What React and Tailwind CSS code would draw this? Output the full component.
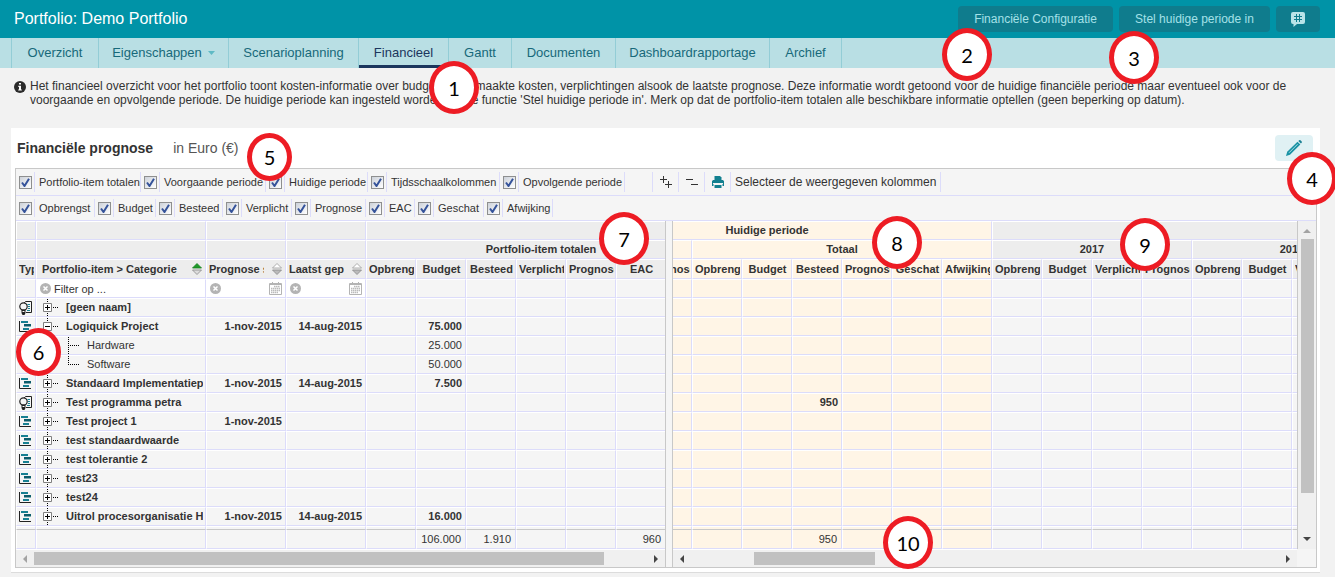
import clsx from 'clsx';

const tabs = [
  { name: 'Overzicht', width: 'w-[88px]' },
  { name: 'Eigenschappen', width: 'w-[130px]', menu: true },
  { name: 'Scenarioplanning', width: 'w-[130px]' },
  { name: 'Financieel', width: 'w-[90px]', active: true },
  { name: 'Gantt', width: 'w-[63px]' },
  { name: 'Documenten', width: 'w-[104px]' },
  { name: 'Dashboardrapportage', width: 'w-[154px]' },
  { name: 'Archief', width: 'w-[72px]' },
];

const periodFilters = [
  { name: 'Portfolio-item totalen', width: 'w-[106px]' },
  { name: 'Voorgaande periode', width: 'w-[106px]' },
  { name: 'Huidige periode', width: 'w-[83px]' },
  { name: 'Tijdsschaalkolommen', width: 'w-[113px]' },
  { name: 'Opvolgende periode', width: 'w-[106px]' },
];

const columnFilters = [
  { name: 'Opbrengst', width: 'w-[60px]' },
  { name: 'Budget', width: 'w-[42px]' },
  { name: 'Besteed', width: 'w-[48px]' },
  { name: 'Verplicht', width: 'w-[50px]' },
  { name: 'Prognose', width: 'w-[55px]' },
  { name: 'EAC', width: 'w-[30px]' },
  { name: 'Geschat', width: 'w-[50px]' },
  { name: 'Afwijking', width: 'w-[50px]' },
];

const totalColumns = ['Opbrengst', 'Budget', 'Besteed', 'Verplicht', 'Prognose', 'EAC', 'Geschat'];

const currentColumns = [
  'Budget', 'Verplicht', 'Prognose',
  'Opbrengst', 'Budget', 'Besteed', 'Prognose', 'Geschat', 'Afwijking',
];
const nextColumns = [
  'Opbrengst', 'Budget', 'Verplicht', 'Prognose',
  'Opbrengst', 'Budget', 'Verplicht', 'Prognose',
];
const periodColumns = [...currentColumns, ...nextColumns];

const rows = [
  { type: 'program', name: '[geen naam]' },
  { type: 'project', name: 'Logiquick Project', open: true, start: '1-nov-2015', end: '14-aug-2015', budget: '75.000' },
  { child: true, name: 'Hardware', budget: '25.000' },
  { child: true, last: true, name: 'Software', budget: '50.000' },
  { type: 'project', name: 'Standaard Implementatieproject', start: '1-nov-2015', end: '14-aug-2015', budget: '7.500' },
  { type: 'program', name: 'Test programma petra', spent: '950' },
  { type: 'project', name: 'Test project 1', start: '1-nov-2015' },
  { type: 'project', name: 'test standaardwaarde' },
  { type: 'project', name: 'test tolerantie 2' },
  { type: 'project', name: 'test23' },
  { type: 'project', name: 'test24' },
  { type: 'project', name: 'Uitrol procesorganisatie HR', start: '1-nov-2015', end: '14-aug-2015', budget: '16.000' },
];

const pins = [
  { left: 429, top: 61 },
  { left: 942, top: 28 },
  { left: 1109, top: 31 },
  { left: 1287, top: 152 },
  { left: 247, top: 133, small: true },
  { left: 16, top: 328, small: true },
  { left: 599, top: 212 },
  { left: 872, top: 216 },
  { left: 1120, top: 218 },
  { left: 883, top: 516 },
];

const box = 'overflow-hidden whitespace-nowrap border border-l-white border-r-[#dcdcfa] border-b-[#dcdcfa] p-0';
const cell = `${box} border-t-white`;
const footCell = `${box} border-t-[#c8c8c8] pr-1 text-right`;
const head = 'bg-[#ededed] text-center font-bold';
const plain = 'bg-[#f5f5f5]';
const current = 'bg-[#fff5e6]';

/* ========== Icons ========== */

function InfoIcon() {
  return (
    <svg className="mt-[2px] h-3 w-3 shrink-0" viewBox="0 0 12 12">
      <circle cx="6" cy="6" r="6" fill="#2b2b2b" />
      <path d="M5 2h2v1.6H5zM4.3 4.8H7v3.6h.8v1.2H4.2V8.4H5V6h-.7z" fill="#fff" />
    </svg>
  );
}

function CommentIcon() {
  return (
    <svg className="h-[15px] w-[14px]" viewBox="0 0 14 15">
      <path d="M2 0h10a2 2 0 0 1 2 2v8a2 2 0 0 1-2 2H6l-3.5 3v-3H2a2 2 0 0 1-2-2V2a2 2 0 0 1 2-2z" fill="#b9e3e8" />
      <path d="M5.5 2v8M8.5 2v8M3 4.5h8M3 7.5h8" stroke="#0f7c8d" strokeWidth="1" />
    </svg>
  );
}

function PencilIcon() {
  return (
    <svg className="h-4 w-4" viewBox="0 0 16 16">
      <path d="M0 16l1.2-4.2L11.5 1.7l2.8 2.8L4 14.8z" fill="#1a93a5" />
      <path d="M3 12.8L11.6 4.2" stroke="#a9d9e0" strokeWidth="1" />
      <path d="M12.3 1l1-.8q.8-.4 1.5.3l.7.7q.7.7.2 1.5l-.8.9z" fill="#1a7f93" />
    </svg>
  );
}

function PrintIcon() {
  return (
    <svg className="h-3 w-3" viewBox="0 0 12 12">
      <path d="M3 0h5l1.5 1.5V4h-7V0z" fill="#12808f" />
      <path d="M0 5l1.2-1h9.6L12 5v5h-1.5V8h-9v2H0z" fill="#12808f" />
      <path d="M2.5 9h7v3h-7z" fill="#12808f" />
      <path d="M1 7.5h10" stroke="#f5f5f5" />
    </svg>
  );
}

function PlusPlusIcon() {
  return (
    <svg className="h-3 w-3" viewBox="0 0 12 12">
      <path d="M0 3.5h7M3.5 0v7M5 8.5h7M8.5 5v7" stroke="#333" fill="none" />
    </svg>
  );
}

function MinusMinusIcon() {
  return (
    <svg className="h-3 w-3" viewBox="0 0 12 12">
      <path d="M0 3.5h7M5 8.5h7" stroke="#333" fill="none" />
    </svg>
  );
}

function ProjectIcon() {
  return (
    <svg className="h-[11px] w-3" viewBox="0 0 12 11">
      <path d="M.5 0v10.5H12" stroke="#222" fill="none" />
      <path d="M2 0h7v2H2zM4 7h6v2H4z" fill="#178092" />
      <path d="M5 3h7v2.500H5z" fill="#0b5c6b" />
    </svg>
  );
}

function ProgramIcon() {
  return (
    <svg className="h-[14px] w-[14px]" viewBox="0 0 14 14">
      <path d="M5 2L6.5 .5h6v11H7" stroke="#222" fill="none" />
      <path d="M8.5 3.5H11M9 5.5h2M9 7.5h2M8 9.5h3" stroke="#178092" />
      <circle cx="4.5" cy="5.5" r="3.7" fill="#f5f5f5" stroke="#222" strokeWidth="1.2" />
      <path d="M2.5 8.5h4V12l-1 2h-2l-1-2z" fill="#222" />
      <path d="M3.5 10.5h2" stroke="#fff" />
    </svg>
  );
}

function SortIcon({ sorted }) {
  return (
    <svg className="mr-[3px] h-3 w-[10px] shrink-0" viewBox="0 0 10 12">
      <path d="M5 .5L9.5 5h-9z" fill={sorted ? '#1e9a2a' : '#fff'} stroke={sorted ? '#16801f' : '#999'} strokeWidth=".8" />
      <path d="M.5 7h9L5 11.5z" fill={sorted ? '#ddd' : '#bbb'} stroke="#888" strokeWidth=".8" />
    </svg>
  );
}

function ClearIcon() {
  return (
    <svg className="h-[11px] w-[11px]" viewBox="0 0 11 11">
      <circle cx="5.5" cy="5.5" r="5.5" fill="#b4b4b4" />
      <path d="M3.5 3.5l4 4M7.5 3.5l-4 4" stroke="#fff" strokeWidth="1.5" />
    </svg>
  );
}

function CalendarIcon() {
  return (
    <svg className="h-[13px] w-[13px]" viewBox="0 0 13 13">
      <path d="M.5 1.5h12v11H.5z" fill="#fff" stroke="#b4b4b4" />
      <path d="M1 2.5h11M3.5 0v3M9.5 0v3" stroke="#b4b4b4" />
      <path d="M5 4.5h6M2 6.5h9M2 8.5h9M2 10.5h7" stroke="#bbb" strokeWidth="1.4" strokeDasharray="1.5 .5" />
    </svg>
  );
}

function Arrow({ direction, muted }) {
  const shapes = {
    left: 'M6 0v8L2 4z',
    right: 'M2 0v8l4-4z',
    up: 'M0 6h8L4 2z',
    down: 'M0 2h8L4 6z',
  };
  return (
    <svg className="h-2 w-2 shrink-0" viewBox="0 0 8 8">
      <path d={shapes[direction]} fill={muted ? '#a3a3a3' : '#444'} />
    </svg>
  );
}

/* Branch lines and the fold box in front of a name */
function TreeBranch({ row }) {
  if (row.child) {
    return (
      <svg className="h-[17px] w-[50px] shrink-0" viewBox="0 0 50 17">
        <path d="M10.5 0v17" stroke="#000" strokeDasharray="1 1" />
        <path d={row.last ? 'M31.5 0v9' : 'M31.5 0v17'} stroke="#000" strokeDasharray="1 1" />
        <path d="M33 8.5h10" stroke="#000" strokeDasharray="1 1" />
      </svg>
    );
  }
  return (
    <svg className="h-[17px] w-[29px] shrink-0" viewBox="0 0 29 17">
      <path d="M10.5 0v17M16 8.5h6" stroke="#000" strokeDasharray="1 1" />
      <path d="M6.5 4.5h8v8h-8z" fill="#fff" stroke="#808080" />
      <path d={row.open ? 'M8 8.5h5' : 'M8 8.5h5M10.5 6v5'} stroke="#000" />
    </svg>
  );
}

/* ========== Toolbar parts ========== */

function CheckFilter({ name, width }) {
  return (
    <label className="flex">
      <span className="grid w-[19px] items-center border-r border-[#dcdcfa] pl-[3px]">
        <input
          type="checkbox"
          defaultChecked
          className="peer col-start-1 row-start-1 h-[13px] w-[13px] appearance-none border border-[#8e8f8f] bg-linear-to-br from-[#cdd2da] to-white"
        />
        <svg className="pointer-events-none invisible col-start-1 row-start-1 ml-[2px] h-[9px] w-[9px] peer-checked:visible" viewBox="0 0 9 9">
          <path d="M1 4.5L3.5 8 8 .8" stroke="#35539a" strokeWidth="2" fill="none" />
        </svg>
      </span>
      <span className={clsx('flex items-center border-r border-[#dcdcfa] pl-1 whitespace-nowrap', width)}>
        {name}
      </span>
    </label>
  );
}

function ToolButton({ label, className, children }) {
  return (
    <button
      type="button"
      aria-label={label}
      className={clsx('flex items-center justify-center border-r border-[#dcdcfa]', className)}
    >
      {children}
    </button>
  );
}

/* ========== Tables ========== */

function FilterCell({ label, placeholder, date }) {
  return (
    <td className={clsx(cell, 'bg-white')}>
      <div className="flex items-center px-[3px]">
        <button type="button" aria-label="Wissen" className="shrink-0">
          <ClearIcon />
        </button>
        <input type="text" aria-label={label} placeholder={placeholder} className="h-4 w-full min-w-0 pl-[3px] placeholder:text-[#333] outline-none" />
        {date && (
          <button type="button" aria-label="Kies datum" className="shrink-0">
            <CalendarIcon />
          </button>
        )}
      </div>
    </td>
  );
}

function SortHeader({ children, sorted, className }) {
  return (
    <th className={clsx(cell, head)}>
      <div className={clsx('flex items-center text-left', className)}>
        <span className="mr-2 flex-1 overflow-hidden">{children}</span>
        <SortIcon sorted={sorted} />
      </div>
    </th>
  );
}

function ColumnHeader({ children, tone }) {
  return (
    <th className={clsx(cell, 'text-center font-bold', tone)}>
      <div className="mr-px ml-[2px] overflow-hidden">{children}</div>
    </th>
  );
}

function ItemsTable() {
  const blanks = totalColumns.map((name, i) => i);
  return (
    <table className="w-[700px] table-fixed border-separate border-spacing-0">
      <colgroup>
        <col className="w-5" />
        <col className="w-[170px]" />
        <col className="w-20" />
        <col className="w-20" />
        {blanks.map((i) => (
          <col key={i} className="w-[50px]" />
        ))}
      </colgroup>
      <thead>
        <tr className="h-[19px]">
          {[0, 1, 2, 3].map((i) => (
            <th key={i} className={clsx(cell, head)}></th>
          ))}
          <th colSpan={7} className={clsx(cell, head)}></th>
        </tr>
        <tr className="h-[19px]">
          {[0, 1, 2, 3].map((i) => (
            <th key={i} className={clsx(cell, head)}></th>
          ))}
          <th colSpan={7} className={clsx(cell, head)}>Portfolio-item totalen</th>
        </tr>
        <tr className="h-5">
          <ColumnHeader tone="bg-[#ededed]">Type</ColumnHeader>
          <SortHeader sorted className="pl-[5px]">Portfolio-item &gt; Categorie</SortHeader>
          <SortHeader className="pl-[2px]">Prognose start</SortHeader>
          <SortHeader className="pl-[2px]">Laatst gepland</SortHeader>
          {totalColumns.map((name) => (
            <ColumnHeader key={name} tone="bg-[#ededed]">{name}</ColumnHeader>
          ))}
        </tr>
      </thead>
      <tbody>
        <tr className="h-[19px]">
          <td className={clsx(cell, plain)}></td>
          <FilterCell label="Filter op naam" placeholder="Filter op ..." />
          <FilterCell label="Filter op prognose start" date />
          <FilterCell label="Filter op laatst gepland" date />
          {blanks.map((i) => (
            <td key={i} className={clsx(cell, plain)}></td>
          ))}
        </tr>
        {rows.map((row) => (
          <tr key={row.name} className={clsx('h-[19px]', !row.child && 'font-bold')}>
            <td className={clsx(cell, plain)}>
              <div className="pl-[2px]">
                {row.type === 'project' && <ProjectIcon />}
                {row.type === 'program' && <ProgramIcon />}
              </div>
            </td>
            <td className={clsx(cell, plain)}>
              <div className="mr-[2px] flex items-center overflow-hidden">
                <TreeBranch row={row} />
                {row.name}
              </div>
            </td>
            <td className={clsx(cell, plain, 'pr-[3px] text-right')}>{row.start}</td>
            <td className={clsx(cell, plain, 'pr-[3px] text-right')}>{row.end}</td>
            {blanks.map((i) => (
              <td key={i} className={clsx(cell, plain, 'pr-[3px] text-right')}>
                {i === 1 && row.budget}
              </td>
            ))}
          </tr>
        ))}
        <tr className="h-[3px]">
          {[0, 1, 2, 3, ...blanks].map((n, i) => (
            <td key={i} className={clsx(cell, plain, 'border-b-0')}></td>
          ))}
        </tr>
      </tbody>
      <tfoot>
        <tr className="h-5">
          {['', '', '', '', '', '106.000', '1.910', '', '', '960', ''].map((total, i) => (
            <td key={i} className={clsx(footCell, plain)}>{total}</td>
          ))}
        </tr>
      </tfoot>
    </table>
  );
}

function PeriodsTable() {
  const tone = (i) => (i < currentColumns.length ? current : plain);
  return (
    <table className="-ml-[131px] w-[850px] table-fixed border-separate border-spacing-0">
      <thead>
        <tr className="h-[19px]">
          <th colSpan={9} className={clsx(cell, current, 'font-bold')}>Huidige periode</th>
          <th colSpan={8} className={clsx(cell, head)}></th>
        </tr>
        <tr className="h-[19px]">
          <th colSpan={3} className={clsx(cell, current)}></th>
          <th colSpan={6} className={clsx(cell, current, 'font-bold')}>Totaal</th>
          <th colSpan={4} className={clsx(cell, head)}>2017</th>
          <th colSpan={4} className={clsx(cell, head)}>2018</th>
        </tr>
        <tr className="h-5">
          {periodColumns.map((name, i) => (
            <ColumnHeader key={i} tone={i < currentColumns.length ? current : 'bg-[#ededed]'}>
              {name}
            </ColumnHeader>
          ))}
        </tr>
      </thead>
      <tbody>
        <tr className="h-[19px]">
          {periodColumns.map((name, i) => (
            <td key={i} className={clsx(cell, tone(i))}></td>
          ))}
        </tr>
        {rows.map((row) => (
          <tr key={row.name} className="h-[19px] font-bold">
            {periodColumns.map((name, i) => (
              <td key={i} className={clsx(cell, tone(i), 'pr-[3px] text-right')}>
                {i === 5 && row.spent}
              </td>
            ))}
          </tr>
        ))}
        <tr className="h-[3px]">
          {periodColumns.map((name, i) => (
            <td key={i} className={clsx(cell, tone(i), 'border-b-0')}></td>
          ))}
        </tr>
      </tbody>
      <tfoot>
        <tr className="h-5">
          {periodColumns.map((name, i) => (
            <td key={i} className={clsx(footCell, tone(i))}>{i === 5 && '950'}</td>
          ))}
        </tr>
      </tfoot>
    </table>
  );
}

function ScrollBar({ thumb, muted }) {
  return (
    <div className="flex h-[18px] items-center justify-between border-t border-white bg-[#f0f0f0] px-[5px]">
      <Arrow direction="left" muted={muted} />
      <div className="flex-1 px-[5px]">
        <div className={clsx('h-[13px] bg-[#c1c1c1]', thumb)}></div>
      </div>
      <Arrow direction="right" />
    </div>
  );
}

export default function App() {
  return (
    <div className="relative min-h-screen overflow-hidden bg-[#f2f2f2] pb-1 font-['Liberation_Sans',Arial,sans-serif] text-[#333]">
      {/* ========== Title Bar ========== */}
      <header className="flex h-[38px] items-center justify-between bg-[#0093a7] pr-[15px] pl-[14px]">
        <h1 className="text-base leading-5 text-white">Portfolio: Demo Portfolio</h1>
        <div className="flex gap-[6px] text-[12px] text-[#a5e1e8]">
          <button type="button" className="h-[26px] w-[155px] rounded-sm bg-[#0f7c8d]">Financiële Configuratie</button>
          <button type="button" className="h-[26px] w-[151px] rounded-sm bg-[#0f7c8d]">Stel huidige periode in</button>
          <button type="button" aria-label="Opmerkingen" className="flex h-[26px] w-11 items-center justify-center rounded-sm bg-[#0f7c8d]">
            <CommentIcon />
          </button>
        </div>
      </header>

      {/* ========== Tabs ========== */}
      <nav className="flex h-[30px] bg-[#b9dfe4] pl-[11px] text-[13px] text-[#17697a]">
        {tabs.map((tab, i) => (
          <a
            key={tab.name}
            href="#"
            className={clsx(
              'flex items-center justify-center border-r border-r-[#93cdd6]',
              tab.width,
              i === 0 && 'border-l border-l-[#93cdd6]',
              tab.active && 'border-b-[3px] border-b-[#1b365d] pt-[3px] text-[#1b365d]'
            )}
          >
            {tab.name}
            {tab.menu && (
              <svg className="ml-[6px] h-1 w-[7px]" viewBox="0 0 7 4">
                <path d="M0 0h7L3.5 4z" fill="#5fbac5" />
              </svg>
            )}
          </a>
        ))}
      </nav>

      {/* ========== Explanation ========== */}
      <div className="mt-[11px] mr-4 ml-[14px] flex gap-1 text-[12px] leading-[14px]">
        <InfoIcon />
        <p>
          Het financieel overzicht voor het portfolio toont kosten-informatie over budgetten, gemaakte kosten,
          verplichtingen alsook de laatste prognose. Deze informatie wordt getoond voor de huidige financiële
          periode maar eventueel ook voor de voorgaande en opvolgende periode. De huidige periode kan ingesteld
          worden via de functie 'Stel huidige periode in'. Merk op dat de portfolio-item totalen alle beschikbare
          informatie optellen (geen beperking op datum).
        </p>
      </div>

      {/* ========== Forecast Panel ========== */}
      <section className="mt-[21px] mr-[15px] ml-[11px] border-b border-[#dcdcdc] bg-white pr-[3px] pb-1 pl-1">
        <div className="flex h-10 items-center justify-between pr-1 pl-[2px]">
          <h2 className="flex gap-5 text-sm">
            <span className="font-bold">Financiële prognose</span>
            <span className="text-[#555]">in Euro (€)</span>
          </h2>
          <button type="button" aria-label="Bewerken" className="flex h-[26px] w-[38px] items-center justify-center rounded-sm bg-[#e0f1f4]">
            <PencilIcon />
          </button>
        </div>

        <div className="border border-[#c8c8c8] bg-[#f5f5f5] text-[11px] leading-[13px]">
          {/* Toolbar */}
          <div className="flex h-[27px] border-b border-[#dcdcfa] py-[3px]">
            {periodFilters.map((filter) => (
              <CheckFilter key={filter.name} {...filter} />
            ))}
            <div className="w-7 border-r border-[#dcdcfa]"></div>
            <ToolButton label="Alles uitklappen" className="w-[26px]">
              <PlusPlusIcon />
            </ToolButton>
            <ToolButton label="Alles inklappen" className="w-[26px]">
              <MinusMinusIcon />
            </ToolButton>
            <ToolButton label="Afdrukken" className="w-[26px]">
              <PrintIcon />
            </ToolButton>
            <button type="button" className="border-r border-[#dcdcfa] px-1 text-[12px] whitespace-nowrap">
              Selecteer de weergegeven kolommen
            </button>
          </div>
          <div className="flex h-[25px] border-b border-[#dcdcfa] py-[3px]">
            {columnFilters.map((filter) => (
              <CheckFilter key={filter.name} {...filter} />
            ))}
          </div>

          {/* Split grid */}
          <div className="flex">
            <div className="w-[649px] shrink-0 overflow-hidden">
              <ItemsTable />
              <ScrollBar thumb="w-[570px]" muted />
            </div>
            <div className="w-2 shrink-0 border-x border-[#c8c8c8]"></div>
            <div className="min-w-0 flex-1 overflow-hidden">
              <PeriodsTable />
              <ScrollBar thumb="ml-[63px] w-[121px]" />
            </div>
            <div className="mb-[18px] flex w-[19px] shrink-0 flex-col items-center justify-between border-l border-[#c8c8c8] bg-[#f0f0f0] py-[6px]">
              <Arrow direction="up" muted />
              <div className="flex-1 py-1">
                <div className="h-[254px] w-[13px] bg-[#c1c1c1]"></div>
              </div>
              <Arrow direction="down" />
            </div>
          </div>
        </div>
      </section>

      {/* ========== Numbered Callouts ========== */}
      {pins.map((pin, i) => (
        <div
          key={i}
          className={clsx(
            'absolute flex items-center justify-center rounded-[50%] border-[5px] border-[#ed1c24] bg-white font-[Lato,sans-serif] text-[20px] leading-6 text-black',
            pin.small ? 'h-12 w-[45px]' : 'h-[53px] w-[50px]'
          )}
          style={{ left: pin.left, top: pin.top }}
        >
          {i + 1}
        </div>
      ))}
    </div>
  );
}
